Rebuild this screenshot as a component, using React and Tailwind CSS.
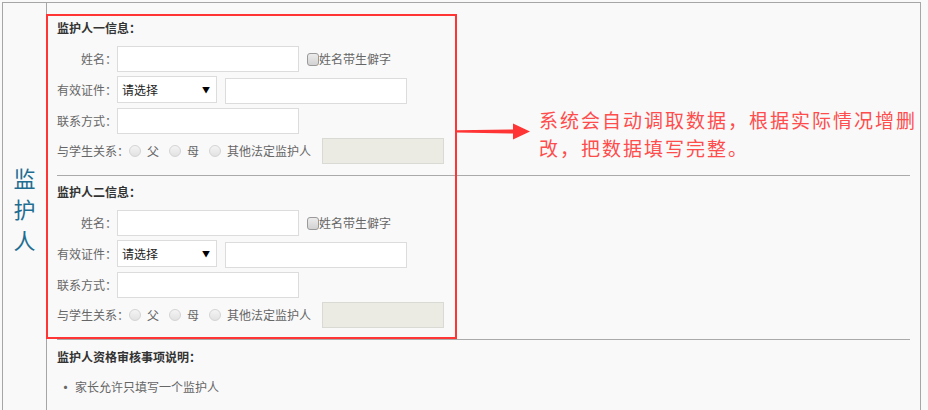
const cjk = { fontFamily: '"Noto Sans CJK SC", "Noto Sans", sans-serif' };

function TextInput({ className = '' }) {
  return <div className={`h-[26px] w-[182px] border border-[#dcdcdc] bg-white ${className}`} />;
}

function Radio({ label }) {
  return (
    <div className="flex items-center">
      <span className="h-[12px] w-[12px] rounded-full border border-[#d4d4d4] bg-gradient-to-b from-[#f4f4f4] to-[#e2e2e2]" />
      <span className="ml-[6px] text-[12px] text-[#666]">{label}</span>
    </div>
  );
}

function GuardianBlock({ title, first }) {
  return (
    <div className={first ? 'pt-[15px]' : 'pt-[6px]'}>
      <div className="h-[20px] text-[12px] font-bold leading-[20px] text-[#333]">{title}</div>

      <div className="mt-[8px] flex h-[26px] items-center">
        <div className="w-[60px] text-right text-[12px] text-[#666]">姓名：</div>
        <TextInput />
        <div className="ml-[8px] flex items-center">
          <span className="h-[13px] w-[12px] rounded-[3px] border border-[#9a9a9a] bg-gradient-to-b from-[#ececec] to-[#d2d2d2]" />
          <span className="text-[12px] text-[#666]">姓名带生僻字</span>
        </div>
      </div>

      <div className="mt-[4px] flex h-[28px] items-start">
        <div className="w-[60px] text-right text-[12px] leading-[27px] text-[#666]">有效证件：</div>
        <div className="flex h-[27px] w-[100px] items-center justify-between border border-[#dcdcdc] bg-white pl-[4px] pr-[6px]">
          <span className="text-[12px] text-[#222]">请选择</span>
          <span className="text-[8px] text-black">▼</span>
        </div>
        <TextInput className="ml-[8px] mt-[2px]" />
      </div>

      <div className="mt-[4px] flex h-[26px] items-center">
        <div className="w-[60px] text-right text-[12px] text-[#666]">联系方式：</div>
        <TextInput />
      </div>

      <div className="mt-[4px] flex h-[26px] items-center">
        <div className="text-[12px] text-[#666]">与学生关系：</div>
        <div className="flex items-center gap-[10px]">
          <Radio label="父" />
          <Radio label="母" />
          <Radio label="其他法定监护人" />
        </div>
        <div className="ml-[11px] h-[26px] w-[122px] border border-[#dadad4] bg-[#ebebe4]" />
      </div>

      <div className="mt-[11px] h-px bg-[#aaa]" />
    </div>
  );
}

export default function App() {
  return (
    <div className="relative h-[410px] w-[928px] overflow-hidden bg-[#f9f9f9]" style={cjk}>
      <div className="pl-[2px] pt-[2px]">
        <div className="flex h-[420px] w-[919px] border-l border-r border-t border-[#a6a6a6]">
          {/* left label cell */}
          <div className="flex w-[44px] flex-col items-center border-r border-[#a6a6a6] pt-[159px] text-[22px] leading-[31px] text-[#1f6e92]">
            <span>监</span>
            <span>护</span>
            <span>人</span>
          </div>

          {/* form cell */}
          <div className="flex-1 px-[10px]">
            <GuardianBlock title="监护人一信息：" first />
            <GuardianBlock title="监护人二信息：" />

            <div className="pt-[7px]">
              <div className="h-[20px] text-[12px] font-bold leading-[20px] text-[#333]">监护人资格审核事项说明：</div>
              <div className="mt-[10px] flex h-[20px] items-center text-[12px] text-[#666]">
                <span className="ml-[1px] mr-[2px] text-[15px] leading-[20px]">•</span>
                家长允许只填写一个监护人
              </div>
            </div>
          </div>
        </div>
      </div>

      {/* annotation overlay */}
      <div className="absolute left-[46px] top-[14px] h-[325px] w-[411px] border-2 border-[#ff3434]" />
      <svg className="absolute left-[457px] top-[120px]" width="75" height="24" viewBox="0 0 75 24">
        <polygon points="0,10.2 56,9.4 56,3.5 73,11.5 56,19.5 56,13.6 0,12.4" fill="#ff3434" />
      </svg>
      <div className="absolute left-[539px] top-[106px] text-[19px] tracking-[2px] text-[#ff4c4c]">
        <div className="h-[28px] leading-[28px]">系统会自动调取数据，根据实际情况增删</div>
        <div className="h-[28px] leading-[28px]">改，把数据填写完整。</div>
      </div>
    </div>
  );
}
